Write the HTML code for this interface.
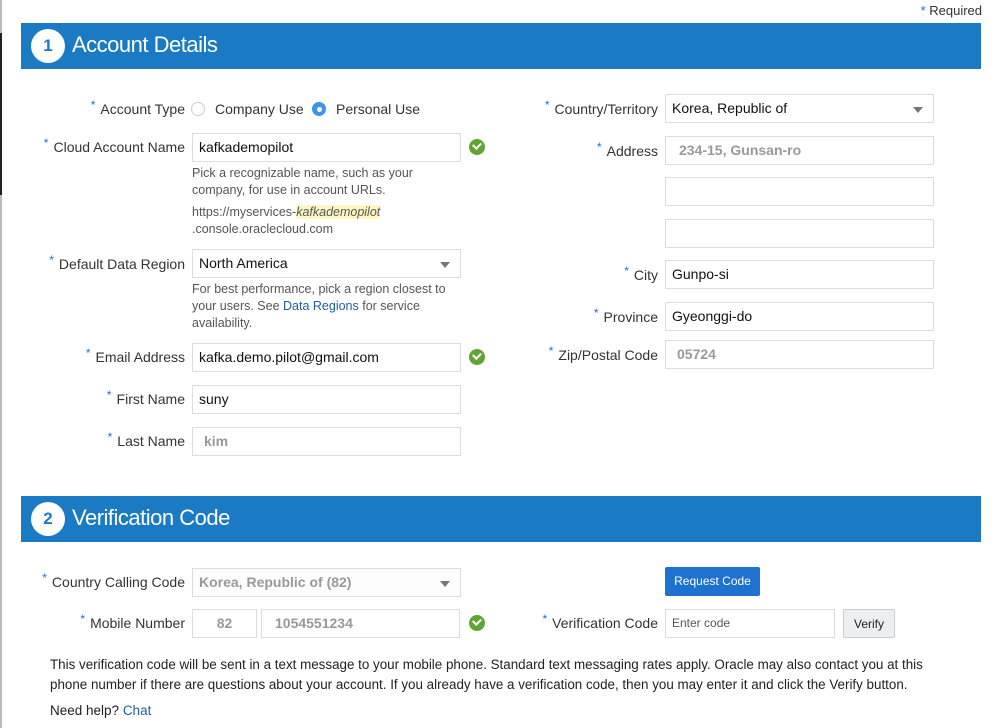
<!DOCTYPE html>
<html><head><meta charset="utf-8"><style>
*{box-sizing:border-box;margin:0;padding:0}
body{width:1000px;height:728px;background:#fff;position:relative;overflow:hidden;font-family:"Liberation Sans",Helvetica,Arial,sans-serif;color:#333;font-size:14px}
.a{position:absolute}
.ban{position:absolute;left:21px;width:960px;height:46px;background:#1a7bc4;color:#fff}
.ban .c{position:absolute;left:10px;top:6px;width:34px;height:34px;border-radius:50%;background:#fff;color:#1a7bc4;font-weight:bold;font-size:17px;text-align:center;line-height:34px}
.ban .t{position:absolute;left:51px;top:9px;font-size:22px;letter-spacing:-0.5px}
.lab{position:absolute;text-align:right;font-size:14px;color:#333;white-space:nowrap}
.lab b{color:#2a6ebb;font-weight:normal;font-size:12px;position:relative;top:-5px;margin-right:5px}
.in{position:absolute;height:29px;border:1px solid #dcdcdc;background:#fff;padding-left:6px;line-height:27px;font-size:14px;color:#111;white-space:nowrap}
.g{color:#999;font-weight:bold}
.dd:after{content:"";position:absolute;right:10px;top:12px;border-left:5px solid transparent;border-right:5px solid transparent;border-top:6px solid #777}
.chk{position:absolute;width:16px;height:16px;border-radius:50%;background:#5ea534}
.chk:after{content:"";position:absolute;left:4px;top:3px;width:6px;height:4px;border-left:2px solid #fff;border-bottom:2px solid #fff;transform:rotate(-45deg)}
.help{position:absolute;font-size:12.5px;color:#555;line-height:17px}
.lk{color:#1f5f9f}
</style></head><body>
<div class="a" style="left:0;top:0;width:2px;height:728px;background:#bbb"></div>
<div class="a" style="left:0;top:33px;width:2px;height:162px;background:#222"></div>
<div class="a" style="right:18px;top:3px;font-size:13px;color:#333"><span style="color:#2a6ebb">*</span> Required</div>

<div class="ban" style="top:23px"><div class="c">1</div><div class="t">Account Details</div></div>

<div class="lab" style="right:815px;top:101px"><b>*</b>Account Type</div>
<div class="a" style="left:191px;top:102px;width:14px;height:14px;border:1px solid #ccc;border-radius:50%"></div>
<div class="a" style="left:215px;top:101px">Company Use</div>
<div class="a" style="left:312px;top:102px;width:14px;height:14px;border-radius:50%;background:#3d94e8"><div class="a" style="left:4.5px;top:4.5px;width:5px;height:5px;border-radius:50%;background:#fff"></div></div>
<div class="a" style="left:336px;top:101px">Personal Use</div>

<div class="lab" style="right:815px;top:139px"><b>*</b>Cloud Account Name</div>
<div class="in" style="left:192px;top:133px;width:269px">kafkademopilot</div>
<div class="chk" style="left:469px;top:139px"></div>
<div class="help" style="left:192px;top:165px;width:260px">Pick a recognizable name, such as your company, for use in account URLs.</div>
<div class="help" style="left:192px;top:204px">https://myservices-<i style="background:#fdf7c3">kafkademopilot</i><br>.console.oraclecloud.com</div>

<div class="lab" style="right:815px;top:256px"><b>*</b>Default Data Region</div>
<div class="in dd" style="left:192px;top:249px;width:269px">North America</div>
<div class="help" style="left:192px;top:281px;width:265px">For best performance, pick a region closest to your users. See <span class="lk">Data Regions</span> for service availability.</div>

<div class="lab" style="right:815px;top:349px"><b>*</b>Email Address</div>
<div class="in" style="left:192px;top:343px;width:269px">kafka.demo.pilot@gmail.com</div>
<div class="chk" style="left:469px;top:349px"></div>

<div class="lab" style="right:815px;top:391px"><b>*</b>First Name</div>
<div class="in" style="left:192px;top:385px;width:269px">suny</div>
<div class="lab" style="right:815px;top:433px"><b>*</b>Last Name</div>
<div class="in g" style="left:192px;top:427px;width:269px;padding-left:11px">kim</div>

<div class="lab" style="right:342px;top:101px"><b>*</b>Country/Territory</div>
<div class="in dd" style="left:665px;top:94px;width:269px">Korea, Republic of</div>
<div class="lab" style="right:342px;top:143px"><b>*</b>Address</div>
<div class="in g" style="left:665px;top:136px;width:269px;padding-left:13px">234-15, Gunsan-ro</div>
<div class="in" style="left:665px;top:177px;width:269px"></div>
<div class="in" style="left:665px;top:219px;width:269px"></div>
<div class="lab" style="right:342px;top:267px"><b>*</b>City</div>
<div class="in" style="left:665px;top:260px;width:269px">Gunpo-si</div>
<div class="lab" style="right:342px;top:309px"><b>*</b>Province</div>
<div class="in" style="left:665px;top:302px;width:269px">Gyeonggi-do</div>
<div class="lab" style="right:342px;top:347px"><b>*</b>Zip/Postal Code</div>
<div class="in g" style="left:665px;top:340px;width:269px;padding-left:11px">05724</div>

<div class="ban" style="top:496px"><div class="c">2</div><div class="t">Verification Code</div></div>

<div class="lab" style="right:815px;top:574px"><b>*</b>Country Calling Code</div>
<div class="in dd g" style="left:192px;top:568px;width:269px;background:#fdfdfd">Korea, Republic of (82)</div>
<div class="lab" style="right:815px;top:615px"><b>*</b>Mobile Number</div>
<div class="in g" style="left:192px;top:609px;width:65px;text-align:center;padding:0">82</div>
<div class="in g" style="left:261px;top:609px;width:199px;padding-left:13px">1054551234</div>
<div class="chk" style="left:469px;top:615px"></div>

<div class="a" style="left:665px;top:567px;width:95px;height:29px;background:#1d72d0;border-radius:2px;color:#fff;font-size:12px;text-align:center;line-height:29px">Request Code</div>
<div class="lab" style="right:342px;top:615px"><b>*</b>Verification Code</div>
<div class="in" style="left:665px;top:609px;width:170px;font-size:12px;color:#555">Enter code</div>
<div class="a" style="left:843px;top:609px;width:52px;height:29px;background:#eceef0;border:1px solid #ccc;border-radius:2px;font-size:12px;text-align:center;line-height:28px;color:#222">Verify</div>

<div class="a" style="left:50px;top:655px;width:900px;font-size:13.4px;line-height:20px;color:#222">This verification code will be sent in a text message to your mobile phone. Standard text messaging rates apply. Oracle may also contact you at this phone number if there are questions about your account. If you already have a verification code, then you may enter it and click the Verify button.</div>
<div class="a" style="left:50px;top:703px;font-size:13.5px;color:#222">Need help? <span class="lk">Chat</span></div>
</body></html>
